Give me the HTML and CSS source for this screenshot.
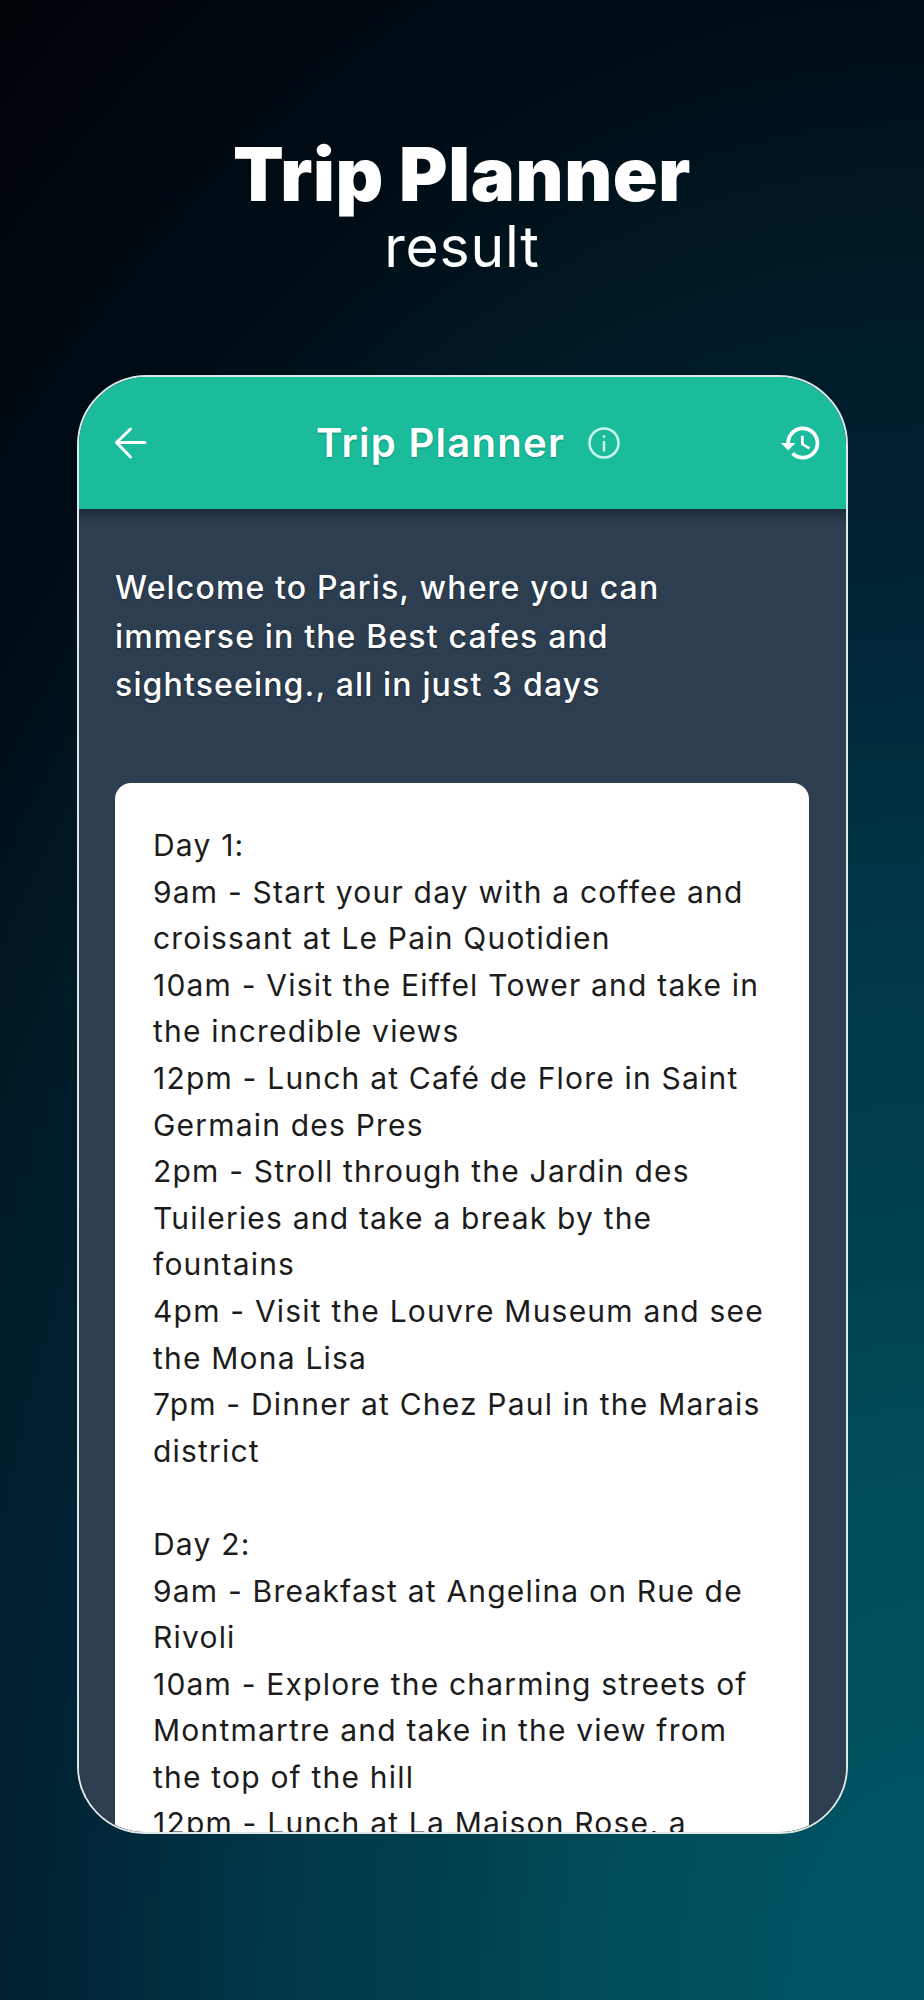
FILE: index.html
```html
<!DOCTYPE html>
<html lang="en">
<head>
  <meta charset="UTF-8">
  <meta name="viewport" content="width=device-width, initial-scale=1.0">
  <title>Trip Planner result</title>
  <link rel="stylesheet" href="styles.css">
</head>
<body>
  <div class="page">
    <!-- Store caption -->
    <div class="caption">
      <h1>Trip Planner</h1>
      <p>result</p>
    </div>

    <!-- Phone screen -->
    <div class="screen">
      <div class="app-bar">
        <svg class="back-icon" viewBox="0 0 32 32" fill="none" stroke="#fff" stroke-width="3" stroke-linecap="round" stroke-linejoin="round">
          <path d="M30 15.5H2M15.5 2L1.5 15.5L15.5 30"/>
        </svg>
        <div class="title-group">
          <h2>Trip Planner</h2>
          <svg class="info-icon" viewBox="0 0 32 32" fill="none" stroke="#c6f5ea" stroke-width="2.6" stroke-linecap="round">
            <circle cx="16" cy="16" r="14.5"/>
            <path d="M16 15v8.5"/>
            <path d="M16 9.2v.6"/>
          </svg>
        </div>
        <svg class="history-icon" viewBox="0 0 24 24" fill="#fff">
          <path d="M13 3c-4.97 0-9 4.03-9 9H1l3.89 3.89.07.14L9 12H6c0-3.87 3.13-7 7-7s7 3.13 7 7-3.13 7-7 7c-1.93 0-3.68-.79-4.94-2.06l-1.42 1.42C8.27 19.99 10.51 21 13 21c4.97 0 9-4.03 9-9s-4.03-9-9-9zm-1 5v5l4.28 2.54.72-1.21-3.5-2.08V8H12z"/>
        </svg>
      </div>

      <div class="content">
        <div class="intro">
          <div>Welcome to Paris, where you can</div>
          <div>immerse in the Best cafes and</div>
          <div>sightseeing., all in just 3 days</div>
        </div>

        <div class="plan">
          <div>Day 1:</div>
          <div>9am - Start your day with a coffee and</div>
          <div>croissant at Le Pain Quotidien</div>
          <div>10am - Visit the Eiffel Tower and take in</div>
          <div>the incredible views</div>
          <div>12pm - Lunch at Café de Flore in Saint</div>
          <div>Germain des Pres</div>
          <div>2pm - Stroll through the Jardin des</div>
          <div>Tuileries and take a break by the</div>
          <div>fountains</div>
          <div>4pm - Visit the Louvre Museum and see</div>
          <div>the Mona Lisa</div>
          <div>7pm - Dinner at Chez Paul in the Marais</div>
          <div>district</div>
          <div class="blank"></div>
          <div>Day 2:</div>
          <div>9am - Breakfast at Angelina on Rue de</div>
          <div>Rivoli</div>
          <div>10am - Explore the charming streets of</div>
          <div>Montmartre and take in the view from</div>
          <div>the top of the hill</div>
          <div>12pm - Lunch at La Maison Rose, a</div>
        </div>
      </div>
    </div>
  </div>
</body>
</html>
```

FILE: styles.css
```css
body {
  margin: 0;
  font-family: Inter, "Liberation Sans", sans-serif;
}
h1, h2, p {
  margin: 0;
}
.page {
  height: 2000px;
  box-sizing: border-box;
  overflow: hidden;
  padding-top: 132px;
  background: radial-gradient(ellipse 1232px 2000px at 100% 100%, #005565 0, #004d5c 25%, #00414f 37.5%, #003a4a 50%, #002030 75%, #001722 90%, #000d16 100%, #000308 125%);
}
.caption {
  text-align: center;
  color: #fff;
}
.caption h1 {
  font-size: 74px;
  font-weight: 900;
  line-height: 84px;
  letter-spacing: 0.6px;
}
.caption p {
  font-size: 57px;
  font-weight: 400;
  line-height: 62px;
  letter-spacing: 0.8px;
}
.screen {
  margin: 97px 76px 0 77px;
  height: 1459px;
  box-sizing: border-box;
  border: 2px solid #dfe8e8;
  border-radius: 70px 70px 68px 68px;
  overflow: hidden;
  background: #2c3e50;
}
.app-bar {
  height: 132px;
  display: flex;
  align-items: center;
  box-sizing: border-box;
  padding: 0 23px 0 36px;
  background: #1abc9c;
  color: #fff;
}
.back-icon {
  width: 32px;
  height: 32px;
}
.title-group {
  display: flex;
  align-items: center;
  gap: 23px;
  margin-left: 169px;
}
.title-group h2 {
  font-size: 40px;
  font-weight: 600;
  line-height: 44px;
  letter-spacing: 1.3px;
  text-shadow: 0 1px 2px rgba(0, 0, 0, 0.25);
}
.info-icon {
  width: 32px;
  height: 32px;
}
.history-icon {
  width: 44px;
  height: 44px;
  margin-left: auto;
}
.content {
  height: 1325px;
  box-sizing: border-box;
  padding: 55px 37px 0 36px;
  background: linear-gradient(#1f2d3a 0, #2c3e50 16px);
}
.intro {
  color: #fff;
  font-size: 32px;
  font-weight: 500;
  line-height: 48.5px;
  letter-spacing: 1.15px;
  white-space: nowrap;
  text-shadow: 0 1px 2px rgba(0, 0, 0, 0.35);
}
.plan {
  margin-top: 73.5px;
  padding: 39px 38px;
  background: #fff;
  border-radius: 16px;
  color: #1c1c1c;
  font-size: 30px;
  line-height: 46.6px;
  letter-spacing: 1.2px;
  white-space: nowrap;
}
.blank {
  height: 46.6px;
}
```
